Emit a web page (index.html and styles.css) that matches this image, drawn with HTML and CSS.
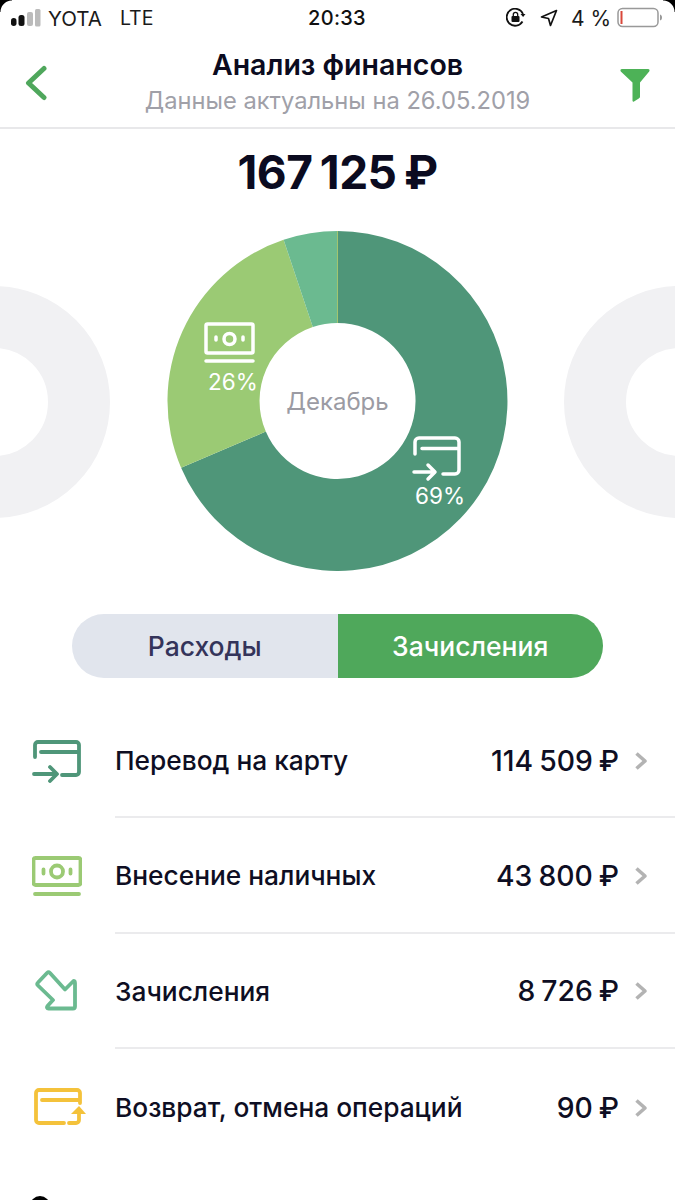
FILE: index.html
```html
<!DOCTYPE html>
<html lang="ru">
<head>
<meta charset="utf-8">
<title>Анализ финансов</title>
<link rel="stylesheet" href="styles.css">
</head>
<body>
<div class="screen">
  <div class="corner corner-left"></div>
  <div class="corner corner-right"></div>
  <div class="status">
    <div class="status-side">
      <svg class="signal" width="30" height="20" viewBox="0 0 30 20"><rect x="0" y="10" width="5.500" height="8" rx="2.700" fill="#111"/><rect x="7.500" y="7" width="6" height="11" rx="2.500" fill="#111"/><rect x="16" y="4" width="6" height="14" rx="2" fill="#bbb"/><rect x="24" y="1" width="5.500" height="17.500" rx="1.500" fill="#bbb"/></svg>
      <span class="carrier">YOTA</span>
      <span class="net">LTE</span>
    </div>
    <div class="time">20:33</div>
    <div class="status-side status-right">
      <svg width="21" height="20" viewBox="0 0 21 20"><path d="M16.500 13.500A8.500 8.500 0 1 1 17 6" fill="none" stroke="#111" stroke-width="1.800"/><path d="M14.500 6h5l-2.400 3z" fill="#111"/><rect x="5.500" y="8" width="8" height="6" rx="1" fill="#111"/><path d="M7.300 8V6.500a2.200 2.200 0 0 1 4.400 0V8" fill="none" stroke="#111" stroke-width="1.300"/></svg>
      <svg class="loc" width="18" height="18" viewBox="0 0 18 18"><path d="M16.500 1.500 1.500 8l7 1.500 2 7z" fill="none" stroke="#111" stroke-width="1.700" stroke-linejoin="round"/></svg>
      <span class="pct">4 %</span>
      <svg class="batt" width="46" height="22" viewBox="0 0 46 22"><rect x="1" y="1.500" width="40" height="18" rx="4.500" fill="#fff" stroke="#999" stroke-width="1.500"/><rect x="3.500" y="4" width="2" height="13" fill="#d9483b"/><path d="M43 7.500c1.500.5 2 1.500 2 3s-.5 2.500-2 3z" fill="#999"/></svg>
    </div>
  </div>

  <header class="head">
    <svg class="back" width="24" height="36" viewBox="0 0 24 36"><path d="M20 3.500 4.500 18 20 32.500" fill="none" stroke="#4fa75c" stroke-width="5" stroke-linecap="round" stroke-linejoin="round"/></svg>
    <div class="titles">
      <div class="title">Анализ финансов</div>
      <div class="subtitle">Данные актуальны на 26.05.2019</div>
    </div>
    <svg class="filter" width="32" height="34" viewBox="0 0 32 34"><path d="M3 1h26c1.500 0 2 1.200 1.200 2.400L21 14.500V28.500c0 1-.5 1.500-1.200 2L15 33.500c-1 .5-1.500 0-1.500-1V14.500L1.800 3.400C1 2.200 1.500 1 3 1z" fill="#4db257"/></svg>
  </header>

  <div class="total">167 125 ₽</div>

  <svg class="chart" width="675" height="340" viewBox="0 231 675 340">
    <circle class="ghost" cx="-6" cy="402" r="85"/>
    <circle class="ghost" cx="680" cy="402" r="85"/>
    <path d="M337.500 231A170 170 0 1 1 181.100 467.700L265.800 431.600A78 78 0 1 0 337.500 323z" fill="#4f9679"/>
    <path d="M181.100 467.700A170 170 0 0 1 283.600 239.800L312.800 327A78 78 0 0 0 265.800 431.600z" fill="#9bca74"/>
    <path d="M283.600 239.800A170 170 0 0 1 337.500 231V323A78 78 0 0 0 312.800 327z" fill="#6bba90"/>
    <path d="M337.500 231V323" stroke="#a3c56f" stroke-width="1"/>
    <text class="center-label" x="337.500" y="410">Декабрь</text>
    <g class="w-icon" transform="translate(205 323)">
      <rect x="1" y="1" width="47" height="29" rx="1.500"/>
      <circle cx="24.500" cy="16" r="5.500"/>
      <path d="M11 14v3M38 14v3M1 38h47"/>
    </g>
    <text class="pie-label" x="233" y="390">26%</text>
    <g class="w-icon" transform="translate(414 436)">
      <path d="M1 18V6a4 4 0 0 1 4-4h36a4 4 0 0 1 4 4v28a4 4 0 0 1-4 4H29M8 12.500h37M0 36h20M14 29l7 7-7 7"/>
    </g>
    <text class="pie-label" x="440" y="504">69%</text>
  </svg>

  <div class="toggle">
    <div class="tab tab-off">Расходы</div>
    <div class="tab tab-on">Зачисления</div>
  </div>

  <ul class="list">
    <li class="row">
      <svg class="ico" width="50" height="44" viewBox="0 0 50 44"><g class="line" stroke="#4f9679"><path d="M3 18V6a3 3 0 0 1 3-3h38a3 3 0 0 1 3 3v27a3 3 0 0 1-3 3H30M9 13h37M2 35h21M18 28l7 7-7 7"/></g></svg>
      <div class="row-body"><span class="name">Перевод на карту</span><span class="amount">114 509 ₽</span><svg class="chev" width="14" height="20" viewBox="0 0 14 20"><path d="M2.500 2.500 11 10l-8.500 7.500" fill="none" stroke="#b3b3b3" stroke-width="3.600" stroke-linejoin="round"/></svg></div>
    </li>
    <li class="row">
      <svg class="ico" width="50" height="40" viewBox="0 0 50 40"><g class="line" stroke="#9bca74"><rect x="1.500" y="2" width="47" height="27" rx="2"/><circle cx="25" cy="15.500" r="6"/><path d="M11.500 13.500v4M38.500 13.500v4M3 38h44"/></g></svg>
      <div class="row-body"><span class="name">Внесение наличных</span><span class="amount">43 800 ₽</span><svg class="chev" width="14" height="20" viewBox="0 0 14 20"><path d="M2.500 2.500 11 10l-8.500 7.500" fill="none" stroke="#b3b3b3" stroke-width="3.600" stroke-linejoin="round"/></svg></div>
    </li>
    <li class="row">
      <svg class="ico" width="50" height="42" viewBox="0 0 50 42"><g class="line" stroke="#6bba90"><path d="M15 3 6 12.500c-1 1-1 2 0 3L21 30l-5.500 6c-1 1.500-.5 2.500 1 2.500H41c1.500 0 2-.5 2-2V13c0-2-1-2.500-2-1.500L33 19.500 18 3c-1-1-2-1-3 0z"/></g></svg>
      <div class="row-body"><span class="name">Зачисления</span><span class="amount">8 726 ₽</span><svg class="chev" width="14" height="20" viewBox="0 0 14 20"><path d="M2.500 2.500 11 10l-8.500 7.500" fill="none" stroke="#b3b3b3" stroke-width="3.600" stroke-linejoin="round"/></svg></div>
    </li>
    <li class="row">
      <svg class="ico ico-yellow" width="54" height="40" viewBox="0 0 54 40"><g class="line" stroke="#f4c23b"><path d="M32 36H7a3 3 0 0 1-3-3V6a3 3 0 0 1 3-3h38a3 3 0 0 1 3 3v10M10 13h36M37 36h7a3 3 0 0 0 3-3V24"/></g><path d="M39 27l8-8 7 8z" fill="#f4c23b"/></svg>
      <div class="row-body"><span class="name">Возврат, отмена операций</span><span class="amount">90 ₽</span><svg class="chev" width="14" height="20" viewBox="0 0 14 20"><path d="M2.500 2.500 11 10l-8.500 7.500" fill="none" stroke="#b3b3b3" stroke-width="3.600" stroke-linejoin="round"/></svg></div>
    </li>
  </ul>
  <div class="blob"></div>
</div>
</body>
</html>
```

FILE: styles.css
```css
* { box-sizing: border-box; }
html, body { margin: 0; padding: 0; background: #fff; }
body { font-family: Inter, "Noto Sans", "Liberation Sans", sans-serif; color: #0e0e23; }
.screen { position: relative; width: 675px; height: 1200px; overflow: hidden; background: #fff; }
.corner { position: absolute; top: 0; width: 12px; height: 12px; background: radial-gradient(circle at 100% 100%, transparent 11px, #000 12px); }
.corner-left { left: 0; }
.corner-right { right: 0; transform: scaleX(-1); }
.status { display: grid; grid-template-columns: 1fr auto 1fr; align-items: center; height: 36px; padding: 0 12px 0 11px; }
.status-side { display: flex; align-items: center; color: #1a1a1a; font-size: 20.500px; }
.status-right { justify-content: flex-end; }
.signal { margin-right: 7px; }
.carrier { margin-right: 18px; }
.net { font-size: 19.500px; }
.time { font-size: 20px; font-weight: 500; color: #111; letter-spacing: .3px; }
.loc { margin-left: 13px; }
.pct { font-size: 21px; margin: 0 6px 0 13px; }
.head { display: flex; align-items: center; justify-content: center; position: relative; height: 93px; border-bottom: 2px solid #e8e8ea; padding-top: 3px; }
.back { position: absolute; left: 24px; top: 29px; }
.filter { position: absolute; left: 619px; top: 32px; }
.titles { text-align: center; }
.title { font-size: 28.500px; font-weight: 600; line-height: 36px; color: #0b0b20; }
.subtitle { font-size: 23.700px; line-height: 36px; color: #a0a0a8; }
.total { font-size: 46px; font-weight: 700; text-align: center; line-height: 50px; margin-top: 18px; color: #0b0b20; letter-spacing: -.5px; word-spacing: -3px; }
.chart { display: block; margin-top: 34px; }
.ghost { fill: none; stroke: #f1f1f3; stroke-width: 62; }
.center-label { font-size: 24px; fill: #9b9ba3; text-anchor: middle; }
.pie-label { font-size: 22.500px; fill: #fff; text-anchor: middle; }
.w-icon { fill: none; stroke: #fff; stroke-width: 3.500; stroke-linecap: round; stroke-linejoin: round; }
.toggle { display: flex; width: 531px; height: 64px; margin: 43px 0 0 72px; border-radius: 32px; overflow: hidden; font-size: 26.500px; }
.tab { flex: 1; display: flex; align-items: center; justify-content: center; }
.tab-off { background: #e1e5ed; color: #34345a; font-weight: 500; }
.tab-on { background: #4fa85b; color: #fff; font-weight: 500; }
.list { list-style: none; margin: 25px 0 0; padding: 0; }
.row { display: flex; align-items: center; height: 115.300px; padding-left: 32px; }
.ico { width: 50px; flex: none; margin-right: 33px; }
.ico-yellow { width: 54px; margin-right: 29px; }
.line { fill: none; stroke-width: 3.800; stroke-linecap: round; stroke-linejoin: round; }
.row-body { flex: 1; display: flex; align-items: center; height: 100%; padding: 2px 27px 0 0; border-bottom: 2px solid #ebebed; }
.row:last-child .row-body { border-bottom: 0; }
.name { flex: 1; font-size: 26.300px; font-weight: 500; }
.amount { font-size: 28.300px; font-weight: 500; margin-right: 15px; word-spacing: -1.500px; }
.blob { position: absolute; left: 30px; top: 1196px; width: 20px; height: 20px; border-radius: 50%; background: #000; }
```
